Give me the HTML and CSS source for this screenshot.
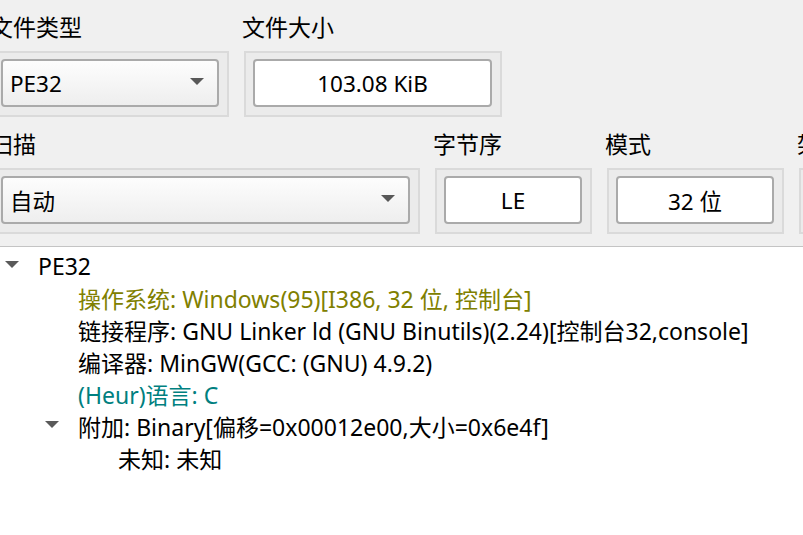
FILE: index.html
```html
<!DOCTYPE html>
<html lang="zh">
<head>
<meta charset="utf-8">
<link rel="stylesheet" href="styles.css">
</head>
<body>
<div class="panel">
  <div class="row">
    <div class="field w-type">
      <div class="label">文件类型</div>
      <div class="frame">
        <div class="combo"><span class="val">PE32</span><span class="arrow"></span></div>
      </div>
    </div>
    <div class="field w-size">
      <div class="label">文件大小</div>
      <div class="frame">
        <div class="edit">103.08 KiB</div>
      </div>
    </div>
  </div>
  <div class="row">
    <div class="field w-scan">
      <div class="label">扫描</div>
      <div class="frame">
        <div class="combo"><span class="val">自动</span><span class="arrow"></span></div>
      </div>
    </div>
    <div class="field w-endian">
      <div class="label">字节序</div>
      <div class="frame">
        <div class="edit">LE</div>
      </div>
    </div>
    <div class="field w-mode">
      <div class="label">模式</div>
      <div class="frame">
        <div class="edit">32 位</div>
      </div>
    </div>
    <div class="field w-arch">
      <div class="label">架构</div>
      <div class="frame">
        <div class="edit">I386</div>
      </div>
    </div>
  </div>
</div>
<div class="tree">
  <div class="node"><span class="slot"><span class="tri"></span></span><span class="txt">PE32</span></div>
  <div class="node l1"><span class="slot"></span><span class="txt olive">操作系统: Windows(95)[I386, 32 位, 控制台]</span></div>
  <div class="node l1"><span class="slot"></span><span class="txt">链接程序: GNU Linker ld (GNU Binutils)(2.24)[控制台32,console]</span></div>
  <div class="node l1"><span class="slot"></span><span class="txt">编译器: MinGW(GCC: (GNU) 4.9.2)</span></div>
  <div class="node l1"><span class="slot"></span><span class="txt teal">(Heur)语言: C</span></div>
  <div class="node l1"><span class="slot"><span class="tri"></span></span><span class="txt">附加: Binary[偏移=0x00012e00,大小=0x6e4f]</span></div>
  <div class="node l2"><span class="slot"></span><span class="txt">未知: 未知</span></div>
</div>
</body>
</html>
```
FILE: styles.css
```css
html, body {
  margin: 0;
  padding: 0;
}
body {
  width: 803px;
  height: 535px;
  overflow: hidden;
  background: #f0f0f0;
  font-family: "Noto Sans", "Noto Sans CJK SC", sans-serif;
  color: #000;
}
.panel {
  margin-left: -8px;
  width: 900px;
}
.row {
  display: flex;
  gap: 15px;
}
.field {
  display: flex;
  flex-direction: column;
  flex: none;
}
.w-type { width: 237px; }
.w-size { width: 258px; }
.w-scan { width: 428px; }
.w-endian { width: 157px; }
.w-mode { width: 177px; }
.w-arch { width: 177px; }
.label {
  font-size: 23px;
  line-height: 30px;
  height: 30px;
  margin-top: 12px;
  margin-bottom: 9px;
  white-space: nowrap;
  margin-left: -2px;
}
.frame {
  box-sizing: border-box;
  height: 66px;
  border: 2px solid #dadada;
  background: #ebebeb;
  padding: 6px 8px 8px 7px;
}
.combo, .edit {
  box-sizing: border-box;
  height: 48px;
  border: 2px solid #aaaaaa;
  border-radius: 4px;
  font-size: 22.5px;
  display: flex;
  align-items: center;
}
.combo {
  background: linear-gradient(#fdfdfd, #eeeeee);
  padding: 0 13px 0 7px;
  justify-content: space-between;
}
.edit {
  background: #ffffff;
  justify-content: center;
}
.arrow {
  width: 0;
  height: 0;
  border-left: 7px solid transparent;
  border-right: 7px solid transparent;
  border-top: 7px solid #585858;
  margin-top: -3px;
}
.tree {
  margin-top: 12px;
  border-top: 1px solid #c4c4c4;
  background: #ffffff;
  height: 300px;
  padding-top: 3px;
}
.node {
  display: flex;
  align-items: center;
  height: 32px;
  font-size: 23px;
  white-space: nowrap;
}
.slot {
  width: 38px;
  flex: none;
  display: flex;
  align-items: center;
}
.tri {
  width: 0;
  height: 0;
  margin-left: 5px;
  margin-top: -4px;
  border-left: 7px solid transparent;
  border-right: 7px solid transparent;
  border-top: 7px solid #5a5a5a;
}
.l1 { padding-left: 40px; }
.l2 { padding-left: 80px; }
.olive { color: #808000; }
.teal { color: #008080; }
```
